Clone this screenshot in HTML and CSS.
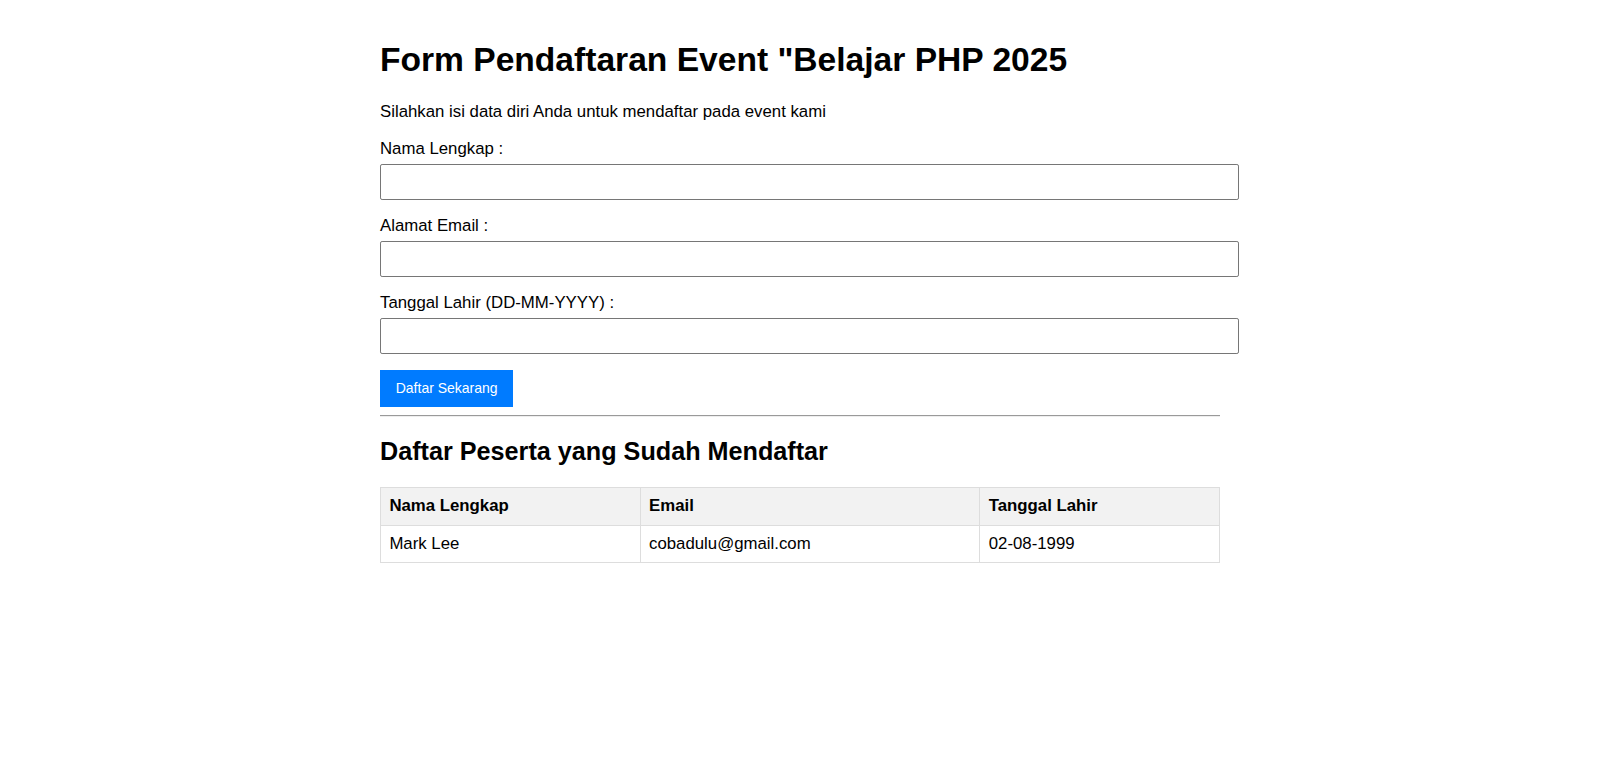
FILE: index.html
```html
<!DOCTYPE html>
<html lang="id">
<head>
<meta charset="utf-8">
<title>Form Pendaftaran Event</title>
<link rel="stylesheet" href="styles.css">
</head>
<body>
<div class="container">
  <h1>Form Pendaftaran Event "Belajar PHP 2025</h1>
  <p class="intro">Silahkan isi data diri Anda untuk mendaftar pada event kami</p>
  <form class="form">
    <label for="nama">Nama Lengkap :</label>
    <input type="text" id="nama" name="nama">
    <label for="email">Alamat Email :</label>
    <input type="text" id="email" name="email">
    <label for="tgl">Tanggal Lahir (DD-MM-YYYY) :</label>
    <input type="text" id="tgl" name="tgl">
    <button type="button" class="btn">Daftar Sekarang</button>
  </form>
  <hr class="divider">
  <h2>Daftar Peserta yang Sudah Mendaftar</h2>
  <table class="peserta">
    <thead>
      <tr><th>Nama Lengkap</th><th>Email</th><th>Tanggal Lahir</th></tr>
    </thead>
    <tbody>
      <tr><td>Mark Lee</td><td>cobadulu@gmail.com</td><td>02-08-1999</td></tr>
    </tbody>
  </table>
</div>
</body>
</html>
```

FILE: styles.css
```css
html {
  zoom: 1.05;
  background: #ffffff;
}

body {
  margin: 0;
  font-family: "Liberation Sans", Arial, sans-serif;
  font-size: 16px;
  color: #000;
}

.container {
  max-width: 800px;
  margin: 0 auto;
  padding: 18px 20px 20px;
}

h1 {
  font-size: 32px;
  font-weight: bold;
  margin: 21.44px 0;
}

.intro {
  margin: 16px 0;
}

.form {
  margin: 0;
}

.form label {
  display: block;
  margin-bottom: 5px;
}

.form input {
  display: block;
  width: 100%;
  height: 16.5px;
  padding: 8px;
  margin: 0 0 15px;
  font-family: "Liberation Sans", Arial, sans-serif;
  font-size: 13.333px;
  line-height: normal;
  border: 1px solid #767676;
  border-radius: 2px;
  background: #fff;
}

.btn {
  display: block;
  background: #007bff;
  color: #fff;
  border: none;
  border-radius: 0;
  padding: 10px 15px;
  font-family: "Liberation Sans", Arial, sans-serif;
  font-size: 13.333px;
  line-height: normal;
  cursor: pointer;
}

.divider {
  margin: 8px 0;
  border: none;
  border-top: 1px solid #9a9a9a;
  border-bottom: 1px solid #eeeeee;
  height: 0;
}

h2 {
  font-size: 24px;
  font-weight: bold;
  margin: 19px 0 19.5px;
}

.peserta {
  width: 100%;
  border-collapse: collapse;
}

.peserta th,
.peserta td {
  border: 1px solid #dddddd;
  padding: 8px;
  text-align: left;
}

.peserta th {
  background: #f2f2f2;
  font-weight: bold;
}
```
